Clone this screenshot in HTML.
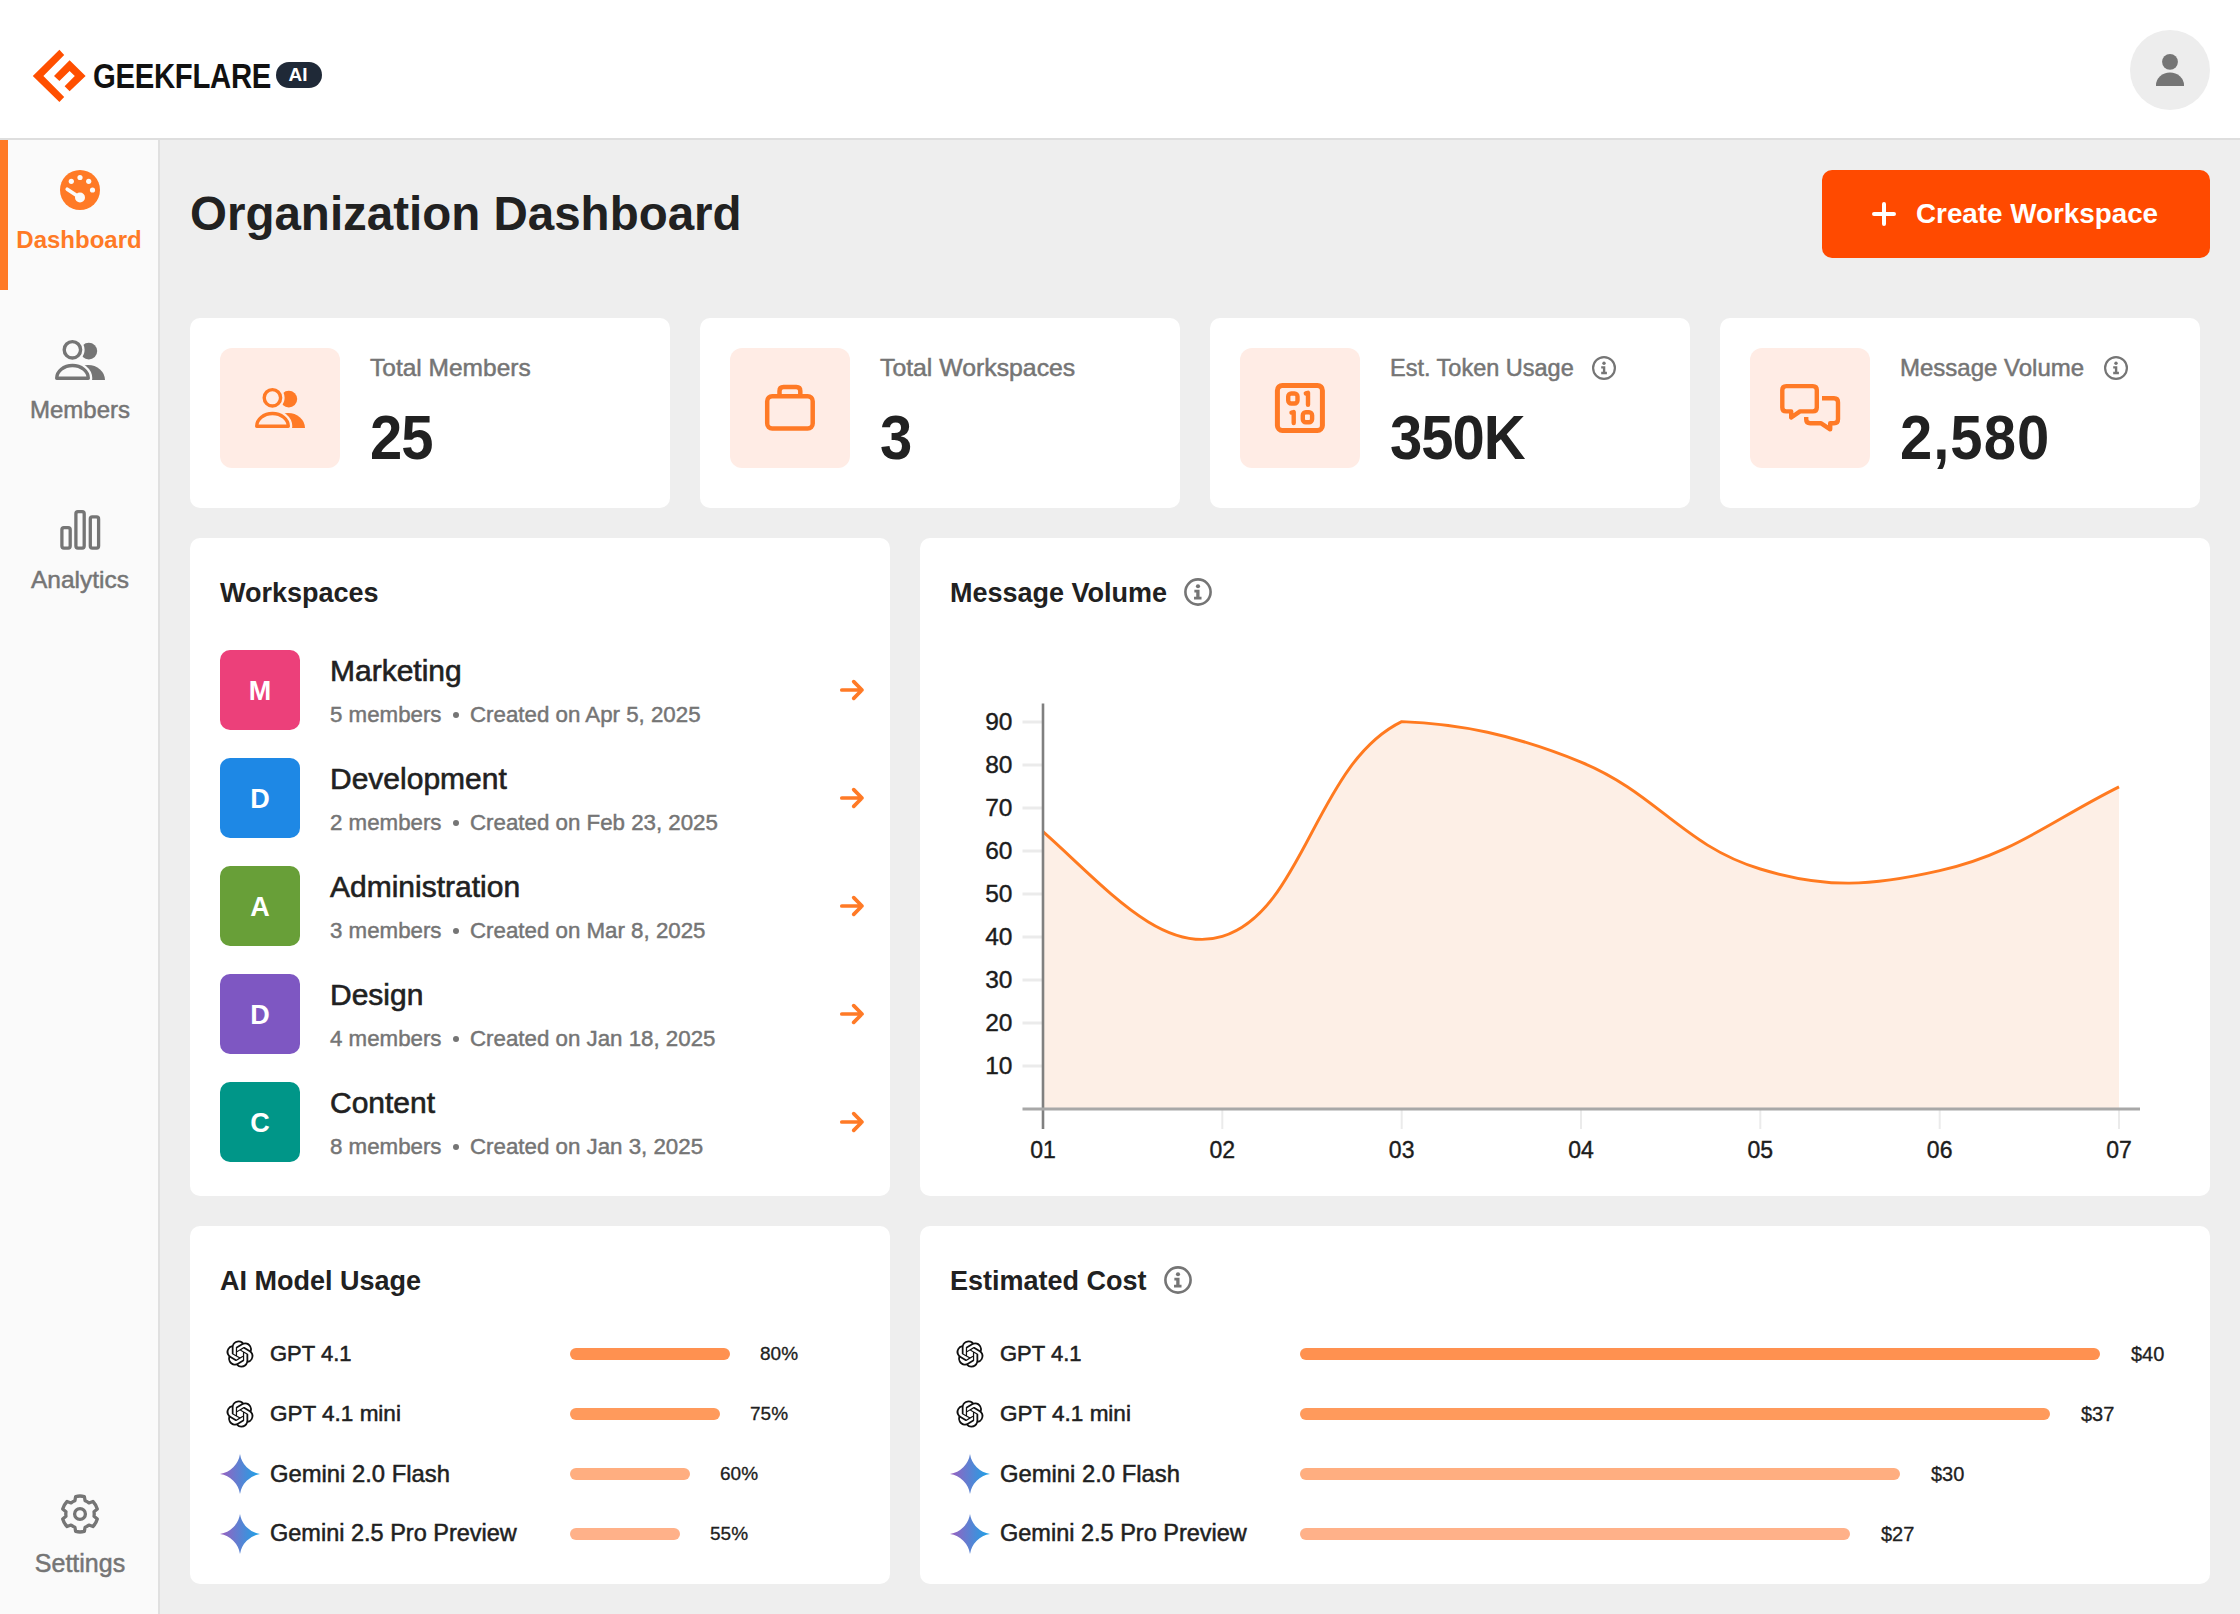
<!DOCTYPE html><html><head><meta charset="utf-8"><style>
*{margin:0;padding:0;box-sizing:border-box}
html,body{width:2240px;height:1614px;overflow:hidden;background:#EEEEEE;font-family:"Liberation Sans",sans-serif;-webkit-font-smoothing:antialiased}
.t{position:absolute;white-space:nowrap}
.abs{position:absolute}
.card{position:absolute;background:#fff;border-radius:10px}
svg{position:absolute;overflow:visible}
</style></head><body>
<div class="abs" style="left:0;top:0;width:2240px;height:138px;background:#FFFFFF"></div><div class="abs" style="left:0;top:138px;width:2240px;height:2px;background:#DEDEDE"></div><svg style="left:0;top:0" width="340" height="140"><polygon fill="#FF4F00" points="59.4,49.7 64.2,54.9 43.4,76.1 64.2,96.9 59.4,101.9 32.8,76.1"/><polygon fill="#FF4F00" points="54,76.1 69.6,60.3 85.6,76.1 69.6,91.2 64.6,86.3 74.8,76.1 69.6,70.9 59.4,80.9"/></svg><div class="t" style="left:93px;top:62.80px;font-size:29.3px;line-height:29.3px;color:#111111;font-weight:700;letter-spacing:-0.3px;transform-origin:0 24.80px;transform:scaleY(1.17);">GEEKFLARE</div>
<div class="abs" style="left:276px;top:62px;width:46px;height:26px;border-radius:13px;background:#1F2937"></div><div class="t" style="left:288.5px;top:64.92px;font-size:19px;line-height:19px;color:#FFFFFF;font-weight:700;">AI</div>
<div class="abs" style="left:2130px;top:30px;width:80px;height:80px;border-radius:40px;background:#EDEDED"></div><svg style="left:0;top:0" width="2240" height="140"><circle cx="2170" cy="61.8" r="7.9" fill="#757575"/><path d="M2156,86.1 L2156,85 A14,12.5 0 0 1 2184,85 L2184,86.1 Z" fill="#757575"/></svg><div class="abs" style="left:0;top:140px;width:158px;height:1474px;background:#FAFAFA"></div><div class="abs" style="left:158px;top:140px;width:2px;height:1474px;background:#E0E0E0"></div><div class="abs" style="left:0;top:140px;width:8px;height:150px;background:#FF7A26"></div><svg style="left:0;top:0" width="160" height="1614">
<circle cx="80" cy="190" r="20" fill="#FF7A26"/>
<circle cx="80" cy="177.5" r="2.6" fill="#FAFAFA"/><circle cx="71.3" cy="181.3" r="2.6" fill="#FAFAFA"/>
<circle cx="88.7" cy="181.3" r="2.6" fill="#FAFAFA"/><circle cx="92.5" cy="190" r="2.6" fill="#FAFAFA"/>
<line x1="67.2" y1="189.2" x2="79" y2="197" stroke="#FAFAFA" stroke-width="3.6" stroke-linecap="round"/>
<circle cx="80" cy="197.5" r="5" fill="#FAFAFA"/>
<g transform="translate(0,0)">
<circle cx="88.8" cy="351.1" r="8.4" fill="#757575"/>
<circle cx="72.4" cy="349.8" r="12.2" fill="#FAFAFA"/>
<circle cx="72.4" cy="349.8" r="8.2" fill="none" stroke="#757575" stroke-width="3.4"/>
<path d="M71,380 A17,15 0 0 1 105,380 Z" fill="#757575"/>
<path d="M56.7,378.3 A15.8,12.8 0 0 1 88.3,378.3 Z" fill="#FAFAFA" stroke="#FAFAFA" stroke-width="8" stroke-linejoin="round"/>
<path d="M56.7,378.3 A15.8,12.8 0 0 1 88.3,378.3 Z" fill="none" stroke="#757575" stroke-width="3.4" stroke-linejoin="round"/>
</g>
<g fill="none" stroke="#757575" stroke-width="3.3">
<rect x="61.9" y="527.7" width="8.3" height="20.4" rx="2"/>
<rect x="75.9" y="511.7" width="8.3" height="36.4" rx="2"/>
<rect x="90.3" y="516.9" width="8.3" height="31.2" rx="2"/>
</g>
<g transform="translate(80,1514)" fill="none" stroke="#757575" stroke-width="3.3" stroke-linejoin="round">
<path d="M-4.35,-17.47 A18.0,18.0 0 0 1 4.35,-17.47 L5.09,-13.26 A14.2,14.2 0 0 1 8.94,-11.04 L12.95,-12.50 A18.0,18.0 0 0 1 17.30,-4.96 L14.03,-2.22 A14.2,14.2 0 0 1 14.03,2.22 L17.30,4.96 A18.0,18.0 0 0 1 12.95,12.50 L8.94,11.04 A14.2,14.2 0 0 1 5.09,13.26 L4.35,17.47 A18.0,18.0 0 0 1 -4.35,17.47 L-5.09,13.26 A14.2,14.2 0 0 1 -8.94,11.04 L-12.95,12.50 A18.0,18.0 0 0 1 -17.30,4.96 L-14.03,2.22 A14.2,14.2 0 0 1 -14.03,-2.22 L-17.30,-4.96 A18.0,18.0 0 0 1 -12.95,-12.50 L-8.94,-11.04 A14.2,14.2 0 0 1 -5.09,-13.26 Z"/>
<circle cx="0" cy="0" r="5.4"/>
</g>
</svg><div class="t" style="left:-121px;width:400px;text-align:center;top:227.68px;font-size:24px;line-height:24px;color:#FF7A26;font-weight:700;">Dashboard</div>
<div class="t" style="left:-120px;width:400px;text-align:center;top:397.68px;font-size:24px;line-height:24px;color:#757575;font-weight:400;-webkit-text-stroke-width:0.5px;">Members</div>
<div class="t" style="left:-120px;width:400px;text-align:center;top:568.26px;font-size:24.5px;line-height:24.5px;color:#757575;font-weight:400;-webkit-text-stroke-width:0.5px;">Analytics</div>
<div class="t" style="left:-120px;width:400px;text-align:center;top:1550.84px;font-size:25px;line-height:25px;color:#757575;font-weight:400;-webkit-text-stroke-width:0.5px;">Settings</div>
<div class="t" style="left:190px;top:190.29px;font-size:47.5px;line-height:47.5px;color:#212121;font-weight:700;">Organization Dashboard</div>
<div class="abs" style="left:1822px;top:170px;width:388px;height:88px;border-radius:10px;background:#FF4A00"></div><svg style="left:0;top:0" width="2240" height="300"><path d="M1884,204 V224 M1874,214 H1894" stroke="#fff" stroke-width="4" stroke-linecap="round"/></svg><div class="t" style="left:1916px;top:200.47px;font-size:27.8px;line-height:27.8px;color:#FFFFFF;font-weight:700;">Create Workspace</div>
<div class="card" style="left:190px;top:318px;width:480px;height:190px"></div><div class="abs" style="left:220px;top:348px;width:120px;height:120px;border-radius:12px;background:#FFECE5"></div><div class="t" style="left:370px;top:355.96px;font-size:24.5px;line-height:24.5px;color:#757575;font-weight:400;-webkit-text-stroke-width:0.5px;">Total Members</div>
<div class="t" style="left:370px;top:409.90px;font-size:58px;line-height:58px;color:#212121;font-weight:700;letter-spacing:-1px;transform-origin:0 49.10px;transform:scaleY(1.1);">25</div>
<div class="card" style="left:700px;top:318px;width:480px;height:190px"></div><div class="abs" style="left:730px;top:348px;width:120px;height:120px;border-radius:12px;background:#FFECE5"></div><div class="t" style="left:880px;top:355.71px;font-size:24.8px;line-height:24.8px;color:#757575;font-weight:400;-webkit-text-stroke-width:0.5px;">Total Workspaces</div>
<div class="t" style="left:880px;top:409.90px;font-size:58px;line-height:58px;color:#212121;font-weight:700;letter-spacing:-1px;transform-origin:0 49.10px;transform:scaleY(1.1);">3</div>
<div class="card" style="left:1210px;top:318px;width:480px;height:190px"></div><div class="abs" style="left:1240px;top:348px;width:120px;height:120px;border-radius:12px;background:#FFECE5"></div><div class="t" style="left:1390px;top:356.81px;font-size:23.5px;line-height:23.5px;color:#757575;font-weight:400;-webkit-text-stroke-width:0.5px;">Est. Token Usage</div>
<div class="t" style="left:1390px;top:409.90px;font-size:58px;line-height:58px;color:#212121;font-weight:700;letter-spacing:-1px;transform-origin:0 49.10px;transform:scaleY(1.1);">350K</div>
<div class="card" style="left:1720px;top:318px;width:480px;height:190px"></div><div class="abs" style="left:1750px;top:348px;width:120px;height:120px;border-radius:12px;background:#FFECE5"></div><div class="t" style="left:1900px;top:356.38px;font-size:24px;line-height:24px;color:#757575;font-weight:400;-webkit-text-stroke-width:0.5px;">Message Volume</div>
<div class="t" style="left:1900px;top:409.90px;font-size:58px;line-height:58px;color:#212121;font-weight:700;letter-spacing:1px;transform-origin:0 49.10px;transform:scaleY(1.1);">2,580</div>
<svg style="left:0;top:0" width="2240" height="520">
<g transform="translate(200,48)">
<circle cx="88.8" cy="351.1" r="8.4" fill="#FF7A26"/>
<circle cx="72.4" cy="349.8" r="12.2" fill="#FFECE5"/>
<circle cx="72.4" cy="349.8" r="8.2" fill="none" stroke="#FF7A26" stroke-width="3.4"/>
<path d="M71,380 A17,15 0 0 1 105,380 Z" fill="#FF7A26"/>
<path d="M56.7,378.3 A15.8,12.8 0 0 1 88.3,378.3 Z" fill="#FFECE5" stroke="#FFECE5" stroke-width="8" stroke-linejoin="round"/>
<path d="M56.7,378.3 A15.8,12.8 0 0 1 88.3,378.3 Z" fill="none" stroke="#FF7A26" stroke-width="3.4" stroke-linejoin="round"/>
</g>
<g fill="none" stroke="#FF7A26" stroke-width="4.5" stroke-linejoin="round">
<rect x="767.2" y="396.2" width="45.5" height="32.3" rx="5"/>
<path d="M779.5,396.2 V391 Q779.5,387.1 783.5,387.1 H796.3 Q800.3,387.1 800.3,391 V396.2"/>
</g>
<g fill="none" stroke="#FF7A26" stroke-linecap="round" stroke-linejoin="round">
<rect x="1277.4" y="385.4" width="45" height="45" rx="5" stroke-width="5"/>
<rect x="1288.2" y="393.5" width="9.3" height="10" rx="3" stroke-width="4.4"/>
<path d="M1305.8,393.4 L1308,392.8 V404.7" stroke-width="4.4"/>
<path d="M1291.5,412.6 L1293.7,412 V423" stroke-width="4.4"/>
<rect x="1302.8" y="412.3" width="9.3" height="10" rx="3" stroke-width="4.4"/>
</g>
<g fill="none" stroke="#FF7A26" stroke-width="4.4" stroke-linejoin="round" stroke-linecap="round">
<path d="M1786.3,386.1 H1812.8 Q1816.8,386.1 1816.8,390.1 V407.4 Q1816.8,411.4 1812.8,411.4 H1800 L1791.2,417.5 V411.4 H1786.3 Q1782.3,411.4 1782.3,407.4 V390.1 Q1782.3,386.1 1786.3,386.1 Z"/>
<path d="M1822,398.3 H1834 Q1838,398.3 1838,402.3 V419.2 Q1838,423.2 1834,423.2 H1830.2 V429.3 L1820.8,423.2 H1810.2 Q1806.2,423.2 1806.2,419.2 V417" stroke-linecap="butt"/>
</g>
<g fill="none" stroke="#757575" stroke-width="2.2">
<circle cx="1604" cy="368" r="10.9"/>
<circle cx="2116" cy="368" r="10.9"/>
</g>
<g fill="#757575">
<circle cx="1604" cy="363.3" r="1.7"/><path d="M1601.2,366.2 H1605.3 V371.8 H1606.9 V374.2 H1601.2 V371.8 H1602.9 V368.4 H1601.2 Z"/>
<circle cx="2116" cy="363.3" r="1.7"/><path d="M2113.2,366.2 H2117.3 V371.8 H2118.9 V374.2 H2113.2 V371.8 H2114.9 V368.4 H2113.2 Z"/>
</g>
</svg><div class="card" style="left:190px;top:538px;width:700px;height:658px"></div><div class="t" style="left:220px;top:580.44px;font-size:27px;line-height:27px;color:#212121;font-weight:700;">Workspaces</div>
<div class="abs" style="left:220px;top:650px;width:80px;height:80px;border-radius:10px;background:#EC407A"></div><div class="t" style="left:60px;width:400px;text-align:center;top:677.54px;font-size:27px;line-height:27px;color:#FFFFFF;font-weight:700;">M</div>
<div class="t" style="left:330px;top:655.61px;font-size:30px;line-height:30px;color:#212121;font-weight:400;-webkit-text-stroke-width:0.6px;">Marketing</div>
<div class="t" style="left:330px;top:704.02px;font-size:22.3px;line-height:22.3px;color:#757575;font-weight:400;-webkit-text-stroke-width:0.45px;">5 members</div>
<div class="abs" style="left:452.5px;top:711.5px;width:6px;height:6px;border-radius:3px;background:#757575"></div><div class="t" style="left:470px;top:704.02px;font-size:22.3px;line-height:22.3px;color:#757575;font-weight:400;-webkit-text-stroke-width:0.45px;">Created on Apr 5, 2025</div>
<div class="abs" style="left:220px;top:758px;width:80px;height:80px;border-radius:10px;background:#1E88E5"></div><div class="t" style="left:60px;width:400px;text-align:center;top:785.54px;font-size:27px;line-height:27px;color:#FFFFFF;font-weight:700;">D</div>
<div class="t" style="left:330px;top:763.61px;font-size:30px;line-height:30px;color:#212121;font-weight:400;-webkit-text-stroke-width:0.6px;">Development</div>
<div class="t" style="left:330px;top:812.02px;font-size:22.3px;line-height:22.3px;color:#757575;font-weight:400;-webkit-text-stroke-width:0.45px;">2 members</div>
<div class="abs" style="left:452.5px;top:819.5px;width:6px;height:6px;border-radius:3px;background:#757575"></div><div class="t" style="left:470px;top:812.02px;font-size:22.3px;line-height:22.3px;color:#757575;font-weight:400;-webkit-text-stroke-width:0.45px;">Created on Feb 23, 2025</div>
<div class="abs" style="left:220px;top:866px;width:80px;height:80px;border-radius:10px;background:#689F38"></div><div class="t" style="left:60px;width:400px;text-align:center;top:893.54px;font-size:27px;line-height:27px;color:#FFFFFF;font-weight:700;">A</div>
<div class="t" style="left:330px;top:871.61px;font-size:30px;line-height:30px;color:#212121;font-weight:400;-webkit-text-stroke-width:0.6px;">Administration</div>
<div class="t" style="left:330px;top:920.02px;font-size:22.3px;line-height:22.3px;color:#757575;font-weight:400;-webkit-text-stroke-width:0.45px;">3 members</div>
<div class="abs" style="left:452.5px;top:927.5px;width:6px;height:6px;border-radius:3px;background:#757575"></div><div class="t" style="left:470px;top:920.02px;font-size:22.3px;line-height:22.3px;color:#757575;font-weight:400;-webkit-text-stroke-width:0.45px;">Created on Mar 8, 2025</div>
<div class="abs" style="left:220px;top:974px;width:80px;height:80px;border-radius:10px;background:#7E57C2"></div><div class="t" style="left:60px;width:400px;text-align:center;top:1001.54px;font-size:27px;line-height:27px;color:#FFFFFF;font-weight:700;">D</div>
<div class="t" style="left:330px;top:979.61px;font-size:30px;line-height:30px;color:#212121;font-weight:400;-webkit-text-stroke-width:0.6px;">Design</div>
<div class="t" style="left:330px;top:1028.02px;font-size:22.3px;line-height:22.3px;color:#757575;font-weight:400;-webkit-text-stroke-width:0.45px;">4 members</div>
<div class="abs" style="left:452.5px;top:1035.5px;width:6px;height:6px;border-radius:3px;background:#757575"></div><div class="t" style="left:470px;top:1028.02px;font-size:22.3px;line-height:22.3px;color:#757575;font-weight:400;-webkit-text-stroke-width:0.45px;">Created on Jan 18, 2025</div>
<div class="abs" style="left:220px;top:1082px;width:80px;height:80px;border-radius:10px;background:#009688"></div><div class="t" style="left:60px;width:400px;text-align:center;top:1109.54px;font-size:27px;line-height:27px;color:#FFFFFF;font-weight:700;">C</div>
<div class="t" style="left:330px;top:1087.61px;font-size:30px;line-height:30px;color:#212121;font-weight:400;-webkit-text-stroke-width:0.6px;">Content</div>
<div class="t" style="left:330px;top:1136.02px;font-size:22.3px;line-height:22.3px;color:#757575;font-weight:400;-webkit-text-stroke-width:0.45px;">8 members</div>
<div class="abs" style="left:452.5px;top:1143.5px;width:6px;height:6px;border-radius:3px;background:#757575"></div><div class="t" style="left:470px;top:1136.02px;font-size:22.3px;line-height:22.3px;color:#757575;font-weight:400;-webkit-text-stroke-width:0.45px;">Created on Jan 3, 2025</div>
<svg style="left:0;top:0" width="2240" height="1614"><g fill="none" stroke="#FF7A26" stroke-width="3.7" stroke-linecap="round" stroke-linejoin="round"><path d="M841.8,690 H861.8 M853.7,681.6 L862,690 L853.7,698.4" /><path d="M841.8,798 H861.8 M853.7,789.6 L862,798 L853.7,806.4" /><path d="M841.8,906 H861.8 M853.7,897.6 L862,906 L853.7,914.4" /><path d="M841.8,1014 H861.8 M853.7,1005.6 L862,1014 L853.7,1022.4" /><path d="M841.8,1122 H861.8 M853.7,1113.6 L862,1122 L853.7,1130.4" /></g></svg><div class="card" style="left:920px;top:538px;width:1290px;height:658px"></div><div class="t" style="left:950px;top:579.64px;font-size:27px;line-height:27px;color:#212121;font-weight:700;">Message Volume</div>
<svg style="left:0;top:0" width="2240" height="1614"><circle cx="1198" cy="592" r="12.6" fill="none" stroke="#757575" stroke-width="2.6"/><g transform="translate(1198,592) scale(1.1)" fill="#757575"><circle cx="0" cy="-5.2" r="1.9"/><path d="M-3.3,-2.1 H1.4 V4.3 H3.2 V6.9 H-3.6 V4.3 H-1.6 V0.5 H-3.3 Z"/></g><g stroke="#EBEBEB" stroke-width="3"><line x1="1022.5" y1="1066.0" x2="1043" y2="1066.0"/><line x1="1022.5" y1="1023.0" x2="1043" y2="1023.0"/><line x1="1022.5" y1="980.0" x2="1043" y2="980.0"/><line x1="1022.5" y1="937.0" x2="1043" y2="937.0"/><line x1="1022.5" y1="894.0" x2="1043" y2="894.0"/><line x1="1022.5" y1="851.0" x2="1043" y2="851.0"/><line x1="1022.5" y1="808.0" x2="1043" y2="808.0"/><line x1="1022.5" y1="765.0" x2="1043" y2="765.0"/><line x1="1022.5" y1="722.0" x2="1043" y2="722.0"/><line x1="1222.3" y1="1109" x2="1222.3" y2="1129" stroke-width="2"/><line x1="1401.7" y1="1109" x2="1401.7" y2="1129" stroke-width="2"/><line x1="1581.0" y1="1109" x2="1581.0" y2="1129" stroke-width="2"/><line x1="1760.3" y1="1109" x2="1760.3" y2="1129" stroke-width="2"/><line x1="1939.7" y1="1109" x2="1939.7" y2="1129" stroke-width="2"/><line x1="2119.0" y1="1109" x2="2119.0" y2="1129" stroke-width="2"/></g><path d="M1043.0,831.7 C1104.2,885.8 1161.4,955.1 1222.3,936.4 C1304.4,911.1 1315.3,763.5 1401.7,721.6 C1458.4,723.6 1514.0,734.6 1581.0,762.1 C1657.0,793.4 1683.4,845.8 1760.3,869.0 C1826.4,889.0 1871.7,886.2 1939.7,870.7 C2014.7,853.5 2048.4,822.2 2119.0,786.9 L2119,1109 L1043,1109 Z" fill="#FDEFE6"/><path d="M1043.0,831.7 C1104.2,885.8 1161.4,955.1 1222.3,936.4 C1304.4,911.1 1315.3,763.5 1401.7,721.6 C1458.4,723.6 1514.0,734.6 1581.0,762.1 C1657.0,793.4 1683.4,845.8 1760.3,869.0 C1826.4,889.0 1871.7,886.2 1939.7,870.7 C2014.7,853.5 2048.4,822.2 2119.0,786.9" fill="none" stroke="#FF7A20" stroke-width="2.9" stroke-linejoin="round"/><line x1="1043" y1="703.5" x2="1043" y2="1129" stroke="#808080" stroke-width="2.6"/><line x1="1022.5" y1="1109" x2="2140" y2="1109" stroke="#A8A8A8" stroke-width="3"/></svg><div class="t" style="left:1012.5px;top:1054.46px;font-size:24.5px;line-height:24.5px;color:#1C1C1C;font-weight:400;transform:translateX(-100%);-webkit-text-stroke-width:0.4px;">10</div>
<div class="t" style="left:1012.5px;top:1011.46px;font-size:24.5px;line-height:24.5px;color:#1C1C1C;font-weight:400;transform:translateX(-100%);-webkit-text-stroke-width:0.4px;">20</div>
<div class="t" style="left:1012.5px;top:968.46px;font-size:24.5px;line-height:24.5px;color:#1C1C1C;font-weight:400;transform:translateX(-100%);-webkit-text-stroke-width:0.4px;">30</div>
<div class="t" style="left:1012.5px;top:925.46px;font-size:24.5px;line-height:24.5px;color:#1C1C1C;font-weight:400;transform:translateX(-100%);-webkit-text-stroke-width:0.4px;">40</div>
<div class="t" style="left:1012.5px;top:882.46px;font-size:24.5px;line-height:24.5px;color:#1C1C1C;font-weight:400;transform:translateX(-100%);-webkit-text-stroke-width:0.4px;">50</div>
<div class="t" style="left:1012.5px;top:839.46px;font-size:24.5px;line-height:24.5px;color:#1C1C1C;font-weight:400;transform:translateX(-100%);-webkit-text-stroke-width:0.4px;">60</div>
<div class="t" style="left:1012.5px;top:796.46px;font-size:24.5px;line-height:24.5px;color:#1C1C1C;font-weight:400;transform:translateX(-100%);-webkit-text-stroke-width:0.4px;">70</div>
<div class="t" style="left:1012.5px;top:753.46px;font-size:24.5px;line-height:24.5px;color:#1C1C1C;font-weight:400;transform:translateX(-100%);-webkit-text-stroke-width:0.4px;">80</div>
<div class="t" style="left:1012.5px;top:710.46px;font-size:24.5px;line-height:24.5px;color:#1C1C1C;font-weight:400;transform:translateX(-100%);-webkit-text-stroke-width:0.4px;">90</div>
<div class="t" style="left:843.0px;width:400px;text-align:center;top:1139.13px;font-size:23px;line-height:23px;color:#1C1C1C;font-weight:400;-webkit-text-stroke-width:0.4px;">01</div>
<div class="t" style="left:1022.3299999999999px;width:400px;text-align:center;top:1139.13px;font-size:23px;line-height:23px;color:#1C1C1C;font-weight:400;-webkit-text-stroke-width:0.4px;">02</div>
<div class="t" style="left:1201.66px;width:400px;text-align:center;top:1139.13px;font-size:23px;line-height:23px;color:#1C1C1C;font-weight:400;-webkit-text-stroke-width:0.4px;">03</div>
<div class="t" style="left:1380.99px;width:400px;text-align:center;top:1139.13px;font-size:23px;line-height:23px;color:#1C1C1C;font-weight:400;-webkit-text-stroke-width:0.4px;">04</div>
<div class="t" style="left:1560.3200000000002px;width:400px;text-align:center;top:1139.13px;font-size:23px;line-height:23px;color:#1C1C1C;font-weight:400;-webkit-text-stroke-width:0.4px;">05</div>
<div class="t" style="left:1739.65px;width:400px;text-align:center;top:1139.13px;font-size:23px;line-height:23px;color:#1C1C1C;font-weight:400;-webkit-text-stroke-width:0.4px;">06</div>
<div class="t" style="left:1918.98px;width:400px;text-align:center;top:1139.13px;font-size:23px;line-height:23px;color:#1C1C1C;font-weight:400;-webkit-text-stroke-width:0.4px;">07</div>
<div class="card" style="left:190px;top:1226px;width:700px;height:358px"></div><div class="t" style="left:220px;top:1267.84px;font-size:27px;line-height:27px;color:#212121;font-weight:700;">AI Model Usage</div>
<div class="card" style="left:920px;top:1226px;width:1290px;height:358px"></div><div class="t" style="left:950px;top:1267.64px;font-size:27px;line-height:27px;color:#212121;font-weight:700;">Estimated Cost</div>
<div class="t" style="left:270px;top:1343.38px;font-size:22px;line-height:22px;color:#212121;font-weight:400;-webkit-text-stroke-width:0.5px;">GPT 4.1</div>
<div class="t" style="left:1000px;top:1343.38px;font-size:22px;line-height:22px;color:#212121;font-weight:400;-webkit-text-stroke-width:0.5px;">GPT 4.1</div>
<div class="t" style="left:760px;top:1344.42px;font-size:19px;line-height:19px;color:#212121;font-weight:400;-webkit-text-stroke-width:0.3px;">80%</div>
<div class="t" style="left:2131px;top:1343.57px;font-size:20px;line-height:20px;color:#212121;font-weight:400;-webkit-text-stroke-width:0.3px;">$40</div>
<div class="t" style="left:270px;top:1402.95px;font-size:22.5px;line-height:22.5px;color:#212121;font-weight:400;-webkit-text-stroke-width:0.5px;">GPT 4.1 mini</div>
<div class="t" style="left:1000px;top:1402.95px;font-size:22.5px;line-height:22.5px;color:#212121;font-weight:400;-webkit-text-stroke-width:0.5px;">GPT 4.1 mini</div>
<div class="t" style="left:750px;top:1404.42px;font-size:19px;line-height:19px;color:#212121;font-weight:400;-webkit-text-stroke-width:0.3px;">75%</div>
<div class="t" style="left:2081px;top:1403.57px;font-size:20px;line-height:20px;color:#212121;font-weight:400;-webkit-text-stroke-width:0.3px;">$37</div>
<div class="t" style="left:270px;top:1461.85px;font-size:23.8px;line-height:23.8px;color:#212121;font-weight:400;-webkit-text-stroke-width:0.5px;">Gemini 2.0 Flash</div>
<div class="t" style="left:1000px;top:1461.85px;font-size:23.8px;line-height:23.8px;color:#212121;font-weight:400;-webkit-text-stroke-width:0.5px;">Gemini 2.0 Flash</div>
<div class="t" style="left:720px;top:1464.42px;font-size:19px;line-height:19px;color:#212121;font-weight:400;-webkit-text-stroke-width:0.3px;">60%</div>
<div class="t" style="left:1931px;top:1463.57px;font-size:20px;line-height:20px;color:#212121;font-weight:400;-webkit-text-stroke-width:0.3px;">$30</div>
<div class="t" style="left:270px;top:1522.11px;font-size:23.5px;line-height:23.5px;color:#212121;font-weight:400;-webkit-text-stroke-width:0.5px;">Gemini 2.5 Pro Preview</div>
<div class="t" style="left:1000px;top:1522.11px;font-size:23.5px;line-height:23.5px;color:#212121;font-weight:400;-webkit-text-stroke-width:0.5px;">Gemini 2.5 Pro Preview</div>
<div class="t" style="left:710px;top:1524.42px;font-size:19px;line-height:19px;color:#212121;font-weight:400;-webkit-text-stroke-width:0.3px;">55%</div>
<div class="t" style="left:1881px;top:1523.57px;font-size:20px;line-height:20px;color:#212121;font-weight:400;-webkit-text-stroke-width:0.3px;">$27</div>
<svg style="left:0;top:0" width="2240" height="1614"><defs><linearGradient id="gg" x1="0" y1="0" x2="1" y2="0"><stop offset="0" stop-color="#9B5FBF"/><stop offset="0.5" stop-color="#5A82D3"/><stop offset="1" stop-color="#1AA3E8"/></linearGradient></defs><g transform="translate(226.5,1340.5) scale(1.125)"><path d="M22.2819 9.8211a5.9847 5.9847 0 0 0-.5157-4.9108 6.0462 6.0462 0 0 0-6.5098-2.9A6.0651 6.0651 0 0 0 4.9807 4.1818a5.9847 5.9847 0 0 0-3.9977 2.9 6.0462 6.0462 0 0 0 .7427 7.0966 5.98 5.98 0 0 0 .511 4.9107 6.051 6.051 0 0 0 6.5146 2.9001A5.9847 5.9847 0 0 0 13.2599 24a6.0557 6.0557 0 0 0 5.7718-4.2058 5.9894 5.9894 0 0 0 3.9977-2.9001 6.0557 6.0557 0 0 0-.7475-7.0729zm-9.022 12.6081a4.4755 4.4755 0 0 1-2.8764-1.0408l.1419-.0804 4.7783-2.7582a.7948.7948 0 0 0 .3927-.6813v-6.7369l2.02 1.1686a.071.071 0 0 1 .038.052v5.5826a4.504 4.504 0 0 1-4.4945 4.4944zm-9.6607-4.1254a4.4708 4.4708 0 0 1-.5346-3.0137l.142.0852 4.783 2.7582a.7712.7712 0 0 0 .7806 0l5.8428-3.3685v2.3324a.0804.0804 0 0 1-.0332.0615L9.74 19.9502a4.4992 4.4992 0 0 1-6.1408-1.6464zM2.3408 7.8956a4.485 4.485 0 0 1 2.3655-1.9728V11.6a.7664.7664 0 0 0 .3879.6765l5.8144 3.3543-2.0201 1.1685a.0757.0757 0 0 1-.071 0l-4.8303-2.7865A4.504 4.504 0 0 1 2.3408 7.872zm16.5963 3.8558L13.1038 8.364 15.1192 7.2a.0757.0757 0 0 1 .071 0l4.8303 2.7913a4.4944 4.4944 0 0 1-.6765 8.1042v-5.6772a.79.79 0 0 0-.407-.667zm2.0107-3.0231l-.142-.0852-4.7735-2.7818a.7759.7759 0 0 0-.7854 0L9.409 9.2297V6.8974a.0662.0662 0 0 1 .0284-.0615l4.8303-2.7866a4.4992 4.4992 0 0 1 6.6802 4.66zM8.3065 12.863l-2.02-1.1638a.0804.0804 0 0 1-.038-.0567V6.0742a4.4992 4.4992 0 0 1 7.3757-3.4537l-.142.0805L8.704 5.459a.7948.7948 0 0 0-.3927.6813zm1.0976-2.3654l2.602-1.4998 2.6069 1.4998v2.9994l-2.5974 1.4997-2.6067-1.4997Z" fill="#111"/></g><g transform="translate(956.5,1340.5) scale(1.125)"><path d="M22.2819 9.8211a5.9847 5.9847 0 0 0-.5157-4.9108 6.0462 6.0462 0 0 0-6.5098-2.9A6.0651 6.0651 0 0 0 4.9807 4.1818a5.9847 5.9847 0 0 0-3.9977 2.9 6.0462 6.0462 0 0 0 .7427 7.0966 5.98 5.98 0 0 0 .511 4.9107 6.051 6.051 0 0 0 6.5146 2.9001A5.9847 5.9847 0 0 0 13.2599 24a6.0557 6.0557 0 0 0 5.7718-4.2058 5.9894 5.9894 0 0 0 3.9977-2.9001 6.0557 6.0557 0 0 0-.7475-7.0729zm-9.022 12.6081a4.4755 4.4755 0 0 1-2.8764-1.0408l.1419-.0804 4.7783-2.7582a.7948.7948 0 0 0 .3927-.6813v-6.7369l2.02 1.1686a.071.071 0 0 1 .038.052v5.5826a4.504 4.504 0 0 1-4.4945 4.4944zm-9.6607-4.1254a4.4708 4.4708 0 0 1-.5346-3.0137l.142.0852 4.783 2.7582a.7712.7712 0 0 0 .7806 0l5.8428-3.3685v2.3324a.0804.0804 0 0 1-.0332.0615L9.74 19.9502a4.4992 4.4992 0 0 1-6.1408-1.6464zM2.3408 7.8956a4.485 4.485 0 0 1 2.3655-1.9728V11.6a.7664.7664 0 0 0 .3879.6765l5.8144 3.3543-2.0201 1.1685a.0757.0757 0 0 1-.071 0l-4.8303-2.7865A4.504 4.504 0 0 1 2.3408 7.872zm16.5963 3.8558L13.1038 8.364 15.1192 7.2a.0757.0757 0 0 1 .071 0l4.8303 2.7913a4.4944 4.4944 0 0 1-.6765 8.1042v-5.6772a.79.79 0 0 0-.407-.667zm2.0107-3.0231l-.142-.0852-4.7735-2.7818a.7759.7759 0 0 0-.7854 0L9.409 9.2297V6.8974a.0662.0662 0 0 1 .0284-.0615l4.8303-2.7866a4.4992 4.4992 0 0 1 6.6802 4.66zM8.3065 12.863l-2.02-1.1638a.0804.0804 0 0 1-.038-.0567V6.0742a4.4992 4.4992 0 0 1 7.3757-3.4537l-.142.0805L8.704 5.459a.7948.7948 0 0 0-.3927.6813zm1.0976-2.3654l2.602-1.4998 2.6069 1.4998v2.9994l-2.5974 1.4997-2.6067-1.4997Z" fill="#111"/></g><rect x="570" y="1348" width="160" height="12" rx="6" fill="#FF9150"/><rect x="1300" y="1348" width="800" height="12" rx="6" fill="#FF9150"/><g transform="translate(226.5,1400.5) scale(1.125)"><path d="M22.2819 9.8211a5.9847 5.9847 0 0 0-.5157-4.9108 6.0462 6.0462 0 0 0-6.5098-2.9A6.0651 6.0651 0 0 0 4.9807 4.1818a5.9847 5.9847 0 0 0-3.9977 2.9 6.0462 6.0462 0 0 0 .7427 7.0966 5.98 5.98 0 0 0 .511 4.9107 6.051 6.051 0 0 0 6.5146 2.9001A5.9847 5.9847 0 0 0 13.2599 24a6.0557 6.0557 0 0 0 5.7718-4.2058 5.9894 5.9894 0 0 0 3.9977-2.9001 6.0557 6.0557 0 0 0-.7475-7.0729zm-9.022 12.6081a4.4755 4.4755 0 0 1-2.8764-1.0408l.1419-.0804 4.7783-2.7582a.7948.7948 0 0 0 .3927-.6813v-6.7369l2.02 1.1686a.071.071 0 0 1 .038.052v5.5826a4.504 4.504 0 0 1-4.4945 4.4944zm-9.6607-4.1254a4.4708 4.4708 0 0 1-.5346-3.0137l.142.0852 4.783 2.7582a.7712.7712 0 0 0 .7806 0l5.8428-3.3685v2.3324a.0804.0804 0 0 1-.0332.0615L9.74 19.9502a4.4992 4.4992 0 0 1-6.1408-1.6464zM2.3408 7.8956a4.485 4.485 0 0 1 2.3655-1.9728V11.6a.7664.7664 0 0 0 .3879.6765l5.8144 3.3543-2.0201 1.1685a.0757.0757 0 0 1-.071 0l-4.8303-2.7865A4.504 4.504 0 0 1 2.3408 7.872zm16.5963 3.8558L13.1038 8.364 15.1192 7.2a.0757.0757 0 0 1 .071 0l4.8303 2.7913a4.4944 4.4944 0 0 1-.6765 8.1042v-5.6772a.79.79 0 0 0-.407-.667zm2.0107-3.0231l-.142-.0852-4.7735-2.7818a.7759.7759 0 0 0-.7854 0L9.409 9.2297V6.8974a.0662.0662 0 0 1 .0284-.0615l4.8303-2.7866a4.4992 4.4992 0 0 1 6.6802 4.66zM8.3065 12.863l-2.02-1.1638a.0804.0804 0 0 1-.038-.0567V6.0742a4.4992 4.4992 0 0 1 7.3757-3.4537l-.142.0805L8.704 5.459a.7948.7948 0 0 0-.3927.6813zm1.0976-2.3654l2.602-1.4998 2.6069 1.4998v2.9994l-2.5974 1.4997-2.6067-1.4997Z" fill="#111"/></g><g transform="translate(956.5,1400.5) scale(1.125)"><path d="M22.2819 9.8211a5.9847 5.9847 0 0 0-.5157-4.9108 6.0462 6.0462 0 0 0-6.5098-2.9A6.0651 6.0651 0 0 0 4.9807 4.1818a5.9847 5.9847 0 0 0-3.9977 2.9 6.0462 6.0462 0 0 0 .7427 7.0966 5.98 5.98 0 0 0 .511 4.9107 6.051 6.051 0 0 0 6.5146 2.9001A5.9847 5.9847 0 0 0 13.2599 24a6.0557 6.0557 0 0 0 5.7718-4.2058 5.9894 5.9894 0 0 0 3.9977-2.9001 6.0557 6.0557 0 0 0-.7475-7.0729zm-9.022 12.6081a4.4755 4.4755 0 0 1-2.8764-1.0408l.1419-.0804 4.7783-2.7582a.7948.7948 0 0 0 .3927-.6813v-6.7369l2.02 1.1686a.071.071 0 0 1 .038.052v5.5826a4.504 4.504 0 0 1-4.4945 4.4944zm-9.6607-4.1254a4.4708 4.4708 0 0 1-.5346-3.0137l.142.0852 4.783 2.7582a.7712.7712 0 0 0 .7806 0l5.8428-3.3685v2.3324a.0804.0804 0 0 1-.0332.0615L9.74 19.9502a4.4992 4.4992 0 0 1-6.1408-1.6464zM2.3408 7.8956a4.485 4.485 0 0 1 2.3655-1.9728V11.6a.7664.7664 0 0 0 .3879.6765l5.8144 3.3543-2.0201 1.1685a.0757.0757 0 0 1-.071 0l-4.8303-2.7865A4.504 4.504 0 0 1 2.3408 7.872zm16.5963 3.8558L13.1038 8.364 15.1192 7.2a.0757.0757 0 0 1 .071 0l4.8303 2.7913a4.4944 4.4944 0 0 1-.6765 8.1042v-5.6772a.79.79 0 0 0-.407-.667zm2.0107-3.0231l-.142-.0852-4.7735-2.7818a.7759.7759 0 0 0-.7854 0L9.409 9.2297V6.8974a.0662.0662 0 0 1 .0284-.0615l4.8303-2.7866a4.4992 4.4992 0 0 1 6.6802 4.66zM8.3065 12.863l-2.02-1.1638a.0804.0804 0 0 1-.038-.0567V6.0742a4.4992 4.4992 0 0 1 7.3757-3.4537l-.142.0805L8.704 5.459a.7948.7948 0 0 0-.3927.6813zm1.0976-2.3654l2.602-1.4998 2.6069 1.4998v2.9994l-2.5974 1.4997-2.6067-1.4997Z" fill="#111"/></g><rect x="570" y="1408" width="150" height="12" rx="6" fill="#FF9A5C"/><rect x="1300" y="1408" width="750" height="12" rx="6" fill="#FF9A5C"/><g transform="translate(220,1454) scale(1.6667)"><path d="M12 24A14.3 14.3 0 0 0 0 12 14.3 14.3 0 0 0 12 0a14.3 14.3 0 0 0 12 12 14.3 14.3 0 0 0-12 12Z" fill="url(#gg)"/></g><g transform="translate(950,1454) scale(1.6667)"><path d="M12 24A14.3 14.3 0 0 0 0 12 14.3 14.3 0 0 0 12 0a14.3 14.3 0 0 0 12 12 14.3 14.3 0 0 0-12 12Z" fill="url(#gg)"/></g><rect x="570" y="1468" width="120" height="12" rx="6" fill="#FFAE80"/><rect x="1300" y="1468" width="600" height="12" rx="6" fill="#FFAE80"/><g transform="translate(220,1514) scale(1.6667)"><path d="M12 24A14.3 14.3 0 0 0 0 12 14.3 14.3 0 0 0 12 0a14.3 14.3 0 0 0 12 12 14.3 14.3 0 0 0-12 12Z" fill="url(#gg)"/></g><g transform="translate(950,1514) scale(1.6667)"><path d="M12 24A14.3 14.3 0 0 0 0 12 14.3 14.3 0 0 0 12 0a14.3 14.3 0 0 0 12 12 14.3 14.3 0 0 0-12 12Z" fill="url(#gg)"/></g><rect x="570" y="1528" width="110" height="12" rx="6" fill="#FFB189"/><rect x="1300" y="1528" width="550" height="12" rx="6" fill="#FFB189"/><circle cx="1178" cy="1280" r="12.6" fill="none" stroke="#757575" stroke-width="2.6"/><g transform="translate(1178,1280) scale(1.1)" fill="#757575"><circle cx="0" cy="-5.2" r="1.9"/><path d="M-3.3,-2.1 H1.4 V4.3 H3.2 V6.9 H-3.6 V4.3 H-1.6 V0.5 H-3.3 Z"/></g></svg></body></html>
